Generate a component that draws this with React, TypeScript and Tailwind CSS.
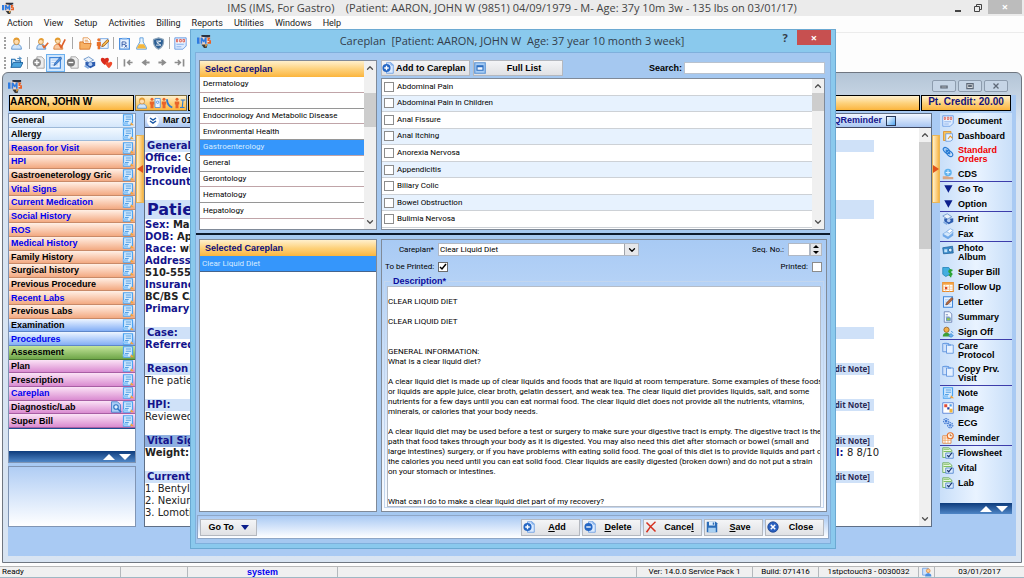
import type { ReactNode } from "react";
import { ChevronDown, ChevronUp } from "lucide-react";

const GOLD = "bg-linear-to-b from-[#fff0cc] via-[#fdd27c] to-[#fbb53a]";
const NAVY_BAR = "bg-linear-to-b from-[#0d3c7c] to-[#4f86c6]";
const BUTTON = "flex items-center border border-[#b4b8bf] bg-linear-to-b from-[#f4f5f7] to-[#e0e1e4]";
const UI = "font-['Open_Sans',sans-serif]";
const BODY = "font-['Roboto',sans-serif]";
const STRONG = "font-['Liberation_Sans',sans-serif] font-bold";

const glyphs: Record<string, ReactNode> = {
  ims: (
    <>
      <circle cx="8" cy="7" r="6" fill="#f4d9c6" />
      <path d="M5 1h10v2l-3 1-7-1z" fill="#2a3140" />
      <path d="M0 4h3v7H0zM4 4h2l2 3 1-3h2v7H9V8l-1 2-2-2v3H4z" fill="#2f7be0" />
      <path d="M15 4h-3v4h2v1h-2v2h4V7h-2V6h1z" fill="#e8622a" />
      <path d="M5 12h7l-1 4H8z" fill="#3b3b3b" />
      <path d="M9 12h3l-2 3z" fill="#e9a53d" />
    </>
  ),
  person: (
    <>
      <path d="M2 15c0-5 3-6 6-6s6 1 6 6z" fill="#cfe4fb" stroke="#4a86c8" />
      <circle cx="8" cy="6" r="3.4" fill="#ffdcae" stroke="#c9862f" />
      <path d="M4 6c-1-7 9-7 8 0-1-3-4-3-5-3-2 0-2 1-3 3z" fill="#e59b2d" />
    </>
  ),
  personCheck: (
    <>
      <path d="M1 15c0-5 2-6 5-6s6 1 6 6z" fill="#cfe4fb" stroke="#4a86c8" />
      <circle cx="6" cy="6" r="3" fill="#ffdcae" stroke="#c9862f" />
      <path d="M3 5c0-5 7-5 7 0-2-2-5-2-7 0z" fill="#e59b2d" />
      <path d="M8 10l2 3 5-6" fill="none" stroke="#e2672a" strokeWidth="2" />
    </>
  ),
  personTick: (
    <>
      <path d="M1 15c0-5 2-6 5-6s6 1 6 6z" fill="#f8c9a0" stroke="#d9772e" />
      <circle cx="6" cy="5" r="3" fill="#ffdcae" stroke="#c9862f" />
      <path d="M2 5c0-6 8-5 7-1-2-1-5-1-7 1z" fill="#e59b2d" />
      <path d="M7 8l3 5 5-10" fill="none" stroke="#dd5f2a" strokeWidth="2" />
    </>
  ),
  folder: (
    <>
      <path d="M5 1h6l3 3v8H5z" fill="#fff" stroke="#e08a3c" />
      <path d="M1 6h4l1 2h9l-2 7H1z" fill="#f7b165" stroke="#d56f1f" />
      <path d="M7 4h4M7 6h5" stroke="#e08a3c" />
    </>
  ),
  personEdit: (
    <>
      <path d="M5 2h10v12H5z" fill="#eef5ff" stroke="#6aa0e0" />
      <circle cx="3.5" cy="3.5" r="2" fill="#e8702a" />
      <path d="M1 6h5v5H5v4H2v-4H1z" fill="#e8702a" />
      <path d="M7 12l1-3 6-6 2 2-6 6z" fill="#f3b84e" stroke="#9a5a1a" />
    </>
  ),
  rx: (
    <>
      <path d="M2 2h12v13H2z" fill="#e8f2ff" stroke="#4b8fe0" strokeWidth="1.5" />
      <path d="M5 1h6v2H5z" fill="#7fb4ee" />
      <path d="M5 12V6h3a2 1.5 0 0 1 0 3H5m3 0l3 4m0-3l-3 3" fill="none" stroke="#234b9c" />
    </>
  ),
  flask: (
    <>
      <path d="M6 1h4v5l4 7v2H2v-2l4-7z" fill="#e9f4ff" stroke="#4e94d8" />
      <path d="M5 9h6l3 5H2z" fill="#f5b63b" />
    </>
  ),
  shield: (
    <>
      <path d="M8 1l6 2c1 6-2 10-6 12C4 13 1 9 2 3z" fill="#2c5f94" stroke="#8fa6bb" strokeWidth="1.5" />
      <path d="M5 5h6L6 7l5 3H5" fill="none" stroke="#fff" />
    </>
  ),
  doc: (
    <>
      <path d="M1 1h14v10l-4 4H1z" fill="#dcebff" stroke="#5b92e2" />
      <path d="M2 3h12v4H2z" fill="#fff" />
      <path d="M3 3h1.5v3H3zM7 3h2v3H7zM11 3h2v3h-2z" fill="none" stroke="#d54a3d" />
      <path d="M3 9h9M3 12h6" stroke="#7fa8e6" />
    </>
  ),
  openFolder: (
    <>
      <path d="M2 14V4h4l1 2h6v3" fill="#cfe8fb" stroke="#1f6cae" strokeWidth="1.4" />
      <path d="M1 14l3-6h12l-3 6z" fill="#4ba3dd" stroke="#1a5c99" />
      <path d="M9 3h4m-2-2l3 2-3 2" fill="none" stroke="#1f6cae" />
    </>
  ),
  plusPage: (
    <>
      <path d="M6 1h6l3 3v11H6z" fill="#eee" stroke="#999" />
      <circle cx="6" cy="8" r="5" fill="#888" />
      <path d="M3 8h6M6 5v6" stroke="#fff" strokeWidth="1.6" />
    </>
  ),
  minusPage: (
    <>
      <path d="M6 1h6l3 3v11H6z" fill="#eee" stroke="#999" />
      <circle cx="6" cy="8" r="5" fill="#777" />
      <path d="M3 8h6" stroke="#fff" strokeWidth="1.6" />
    </>
  ),
  bluePlus: (
    <>
      <path d="M6 1h6l3 3v11H6z" fill="#dcebff" stroke="#5a93dd" />
      <path d="M12 1v3h3" fill="none" stroke="#5a93dd" />
      <circle cx="6" cy="8" r="5.4" fill="#2466c4" />
      <path d="M3 8h6M6 5v6" stroke="#fff" strokeWidth="1.8" />
    </>
  ),
  blueMinus: (
    <>
      <path d="M6 1h6l3 3v11H6z" fill="#dcebff" stroke="#5a93dd" />
      <path d="M12 1v3h3" fill="none" stroke="#5a93dd" />
      <circle cx="6" cy="8" r="5.4" fill="#2466c4" />
      <path d="M3 8h6" stroke="#fff" strokeWidth="1.8" />
    </>
  ),
  letter: (
    <>
      <path d="M2 1h12v14H2z" fill="#e8f2ff" stroke="#3f86dc" strokeWidth="1.4" />
      <path d="M4 5h7M4 8h5M4 11h8" stroke="#9cc0ee" />
      <path d="M5 12l1-3 7-7 2 2-7 7z" fill="#b7683d" stroke="#5c2f1d" strokeWidth=".7" />
    </>
  ),
  editPage: (
    <>
      <path d="M1 2h13v13H1z" fill="#eaf4ff" stroke="#3f86dc" strokeWidth="1.4" />
      <path d="M3 5h7M3 8h5M3 11h8" stroke="#9cc0ee" />
      <path d="M6 12l1-3 7-8 2 2-7 7z" fill="#4b8fe0" stroke="#1d4f98" strokeWidth=".7" />
    </>
  ),
  printer: (
    <>
      <path d="M1 4l6-3 6 4-6 3z" fill="#e9f1fb" stroke="#5f8cc4" />
      <path d="M3 7l5 1 7-1v5l-6 3-6-4z" fill="#2d5db0" />
      <circle cx="9" cy="10" r="2.4" fill="#b9d0f2" />
      <path d="M2 12l5 3" stroke="#7fa9e0" strokeWidth="2" />
    </>
  ),
  hearts: (
    <>
      <path d="M6 11C0 7 0 2 3 2c2 0 3 1 3 2 0-1 1-2 3-2 3 0 3 5-3 9z" fill="#d92b1c" />
      <path d="M11 15c-5-4-5-8-2-8 1 0 2 1 2 2 0-1 1-2 2-2 3 0 3 4-2 8z" fill="#ef4a2c" />
    </>
  ),
  first: <path d="M3 4v9M13 8H7m3-3L7 8l3 3" fill="none" stroke="#8d8d8d" strokeWidth="2" />,
  prev: <path d="M13 8H5m4-3L5 8l4 3" fill="none" stroke="#8d8d8d" strokeWidth="2.4" />,
  next: <path d="M3 8h8M7 5l4 3-4 3" fill="none" stroke="#8d8d8d" strokeWidth="2.4" />,
  last: <path d="M13 4v9M2 8h7M6 5l3 3-3 3" fill="none" stroke="#8d8d8d" strokeWidth="2" />,
  note: (
    <>
      <path d="M2 1h12v10l-3 4H2z" fill="#d3eafe" stroke="#4ba2f0" strokeWidth="1.6" />
      <path d="M5 4h7M5 7h7M4 10h5" stroke="#4a98e0" strokeWidth="1.2" />
      <path d="M1 11h7v3H1z" fill="#8cc6f8" />
      <path d="M12 11l4 4h-5z" fill="#f2a33c" />
    </>
  ),
  search: (
    <>
      <path d="M2 1h8l4 4v10H2z" fill="#a9cdf6" stroke="#2f74c4" />
      <circle cx="8" cy="8" r="3" fill="#e4f2ff" stroke="#2f74c4" strokeWidth="1.5" />
      <path d="M10 10l5 5" stroke="#2f74c4" strokeWidth="2" />
    </>
  ),
  guide: (
    <>
      <circle cx="4" cy="3" r="2" fill="#e8642a" />
      <path d="M1 6h6v4H6v5H2v-5H1z" fill="#e8642a" />
      <path d="M8 2h7v12H8z" fill="#eaf3ff" stroke="#3f86dc" />
      <circle cx="11.5" cy="7" r="1.6" fill="none" stroke="#3f86dc" />
    </>
  ),
  call: (
    <>
      <circle cx="4" cy="3" r="2" fill="#e8642a" />
      <path d="M1 6h6v4H6v5H2v-5H1z" fill="#e8642a" />
      <path d="M8 3c0 6 2 9 7 11" fill="none" stroke="#2f7bd0" strokeWidth="2.5" />
    </>
  ),
  info: (
    <>
      <circle cx="4" cy="3" r="2" fill="#e8642a" />
      <path d="M1 6h6v4H6v5H2v-5H1z" fill="#e8642a" />
      <path d="M9 4h6M12 4l-1 10M8 14h6" fill="none" stroke="#2f7bd0" strokeWidth="1.5" />
    </>
  ),
  dashboard: (
    <>
      <path d="M2 2h10v12H2z" fill="#f9c35a" stroke="#d98a1d" />
      <path d="M5 5h9v8l-3 2H5z" fill="#eaf4ff" stroke="#5a93dd" />
      <path d="M8 12l3-4 3 3" fill="none" stroke="#e59b2d" strokeWidth="1.5" />
    </>
  ),
  chain: (
    <g fill="none" stroke="#2b7cd3" strokeWidth="1.5">
      <ellipse cx="6" cy="6" rx="5" ry="3" transform="rotate(40 6 6)" fill="#a9d2fa" />
      <ellipse cx="10" cy="10" rx="5" ry="3" transform="rotate(40 10 10)" />
      <path d="M5 5l6 6" />
    </g>
  ),
  hand: (
    <>
      <circle cx="8" cy="6" r="5" fill="#5fb2ee" />
      <path d="M8 3v6M5 6h6" stroke="#dff0ff" strokeWidth="1.5" />
      <path d="M1 11h6l3 1h5v3H1z" fill="#d8a684" />
    </>
  ),
  down: <path d="M3 3h11L8.5 13z" fill="#0c1f8c" />,
  fax: (
    <>
      <path d="M1 8l8-5 6 3-7 6z" fill="#d5e8fb" stroke="#7daee4" />
      <path d="M6 5l5-4 4 2-5 4z" fill="#fff" stroke="#7daee4" />
      <path d="M1 8l7 4v3l-7-4zM8 12l7-6v4l-7 5z" fill="#6fa8e8" />
    </>
  ),
  camera: (
    <>
      <path d="M1 5l13-2 1 9-13 1z" fill="#3d8fce" stroke="#1c5f98" />
      <path d="M3 7h4v4H3z" fill="#bfe2f8" />
      <circle cx="11" cy="8" r="2.5" fill="#dff1ff" stroke="#1c5f98" />
    </>
  ),
  money: (
    <>
      <path d="M1 2h8l2 3v6l-6 3-4-3z" fill="#43aee0" stroke="#1c7fb4" />
      <path d="M14 6c-5-2-6 2-3 3s3 4-2 3M11.5 4v11" fill="none" stroke="#2aa434" strokeWidth="2" />
    </>
  ),
  calendar: (
    <>
      <path d="M1 2h14v12H1z" fill="#fff" stroke="#e58a2c" strokeWidth="1.5" />
      <path d="M1 2h14v3H1z" fill="#f5a445" />
      <path d="M5 5v9M10 5v9M1 8h14M1 11h14" stroke="#f3bf85" />
      <path d="M4 8h3v3H4z" fill="#d94a2a" />
    </>
  ),
  summary: (
    <>
      <path d="M3 1h7l3 3v11H3z" fill="#f4f8ff" stroke="#5a72a8" />
      <path d="M5 5h3M5 8h5" stroke="#5a72a8" />
      <path d="M6 9h5v4H6z" fill="#9cc64b" stroke="#4d86c8" />
    </>
  ),
  signOff: (
    <>
      <circle cx="6" cy="5" r="3.5" fill="#f2b04a" stroke="#8d5716" />
      <path d="M1 14c0-4 3-5 5-5s5 1 5 5z" fill="#3d9f38" />
      <path d="M9 13l3-3 3 3-3 2zM12 7l3 2" fill="#6bb0ee" stroke="#2f80d0" />
    </>
  ),
  copy: (
    <>
      <path d="M1 2h8v11H1z" fill="#cfe2fb" stroke="#4b86d8" />
      <path d="M6 4h9v11H6z" fill="#e6f1ff" stroke="#4b86d8" />
      <path d="M3 1h4v2H3zM8 3h4v2H8z" fill="#6fa3e6" />
    </>
  ),
  image: (
    <>
      <path d="M1 1h14v14H1z" fill="#fff" stroke="#3f6fd0" />
      <path d="M3 3h4v4H3z" fill="#e04a35" />
      <path d="M7 7h3v3H7z" fill="#2d3f9c" />
      <path d="M10 9h4v5h-4z" fill="#f0b63a" />
      <path d="M10 3h3v3h-3z" fill="#4b9ee8" />
    </>
  ),
  gears: (
    <g fill="#c5dcfa" stroke="#4a7fd4" strokeWidth="1.5">
      <circle cx="5.5" cy="5.5" r="3.5" strokeDasharray="2 1" />
      <circle cx="11" cy="11" r="3.5" strokeDasharray="2 1" />
      <circle cx="5.5" cy="5.5" r="1" />
      <circle cx="11" cy="11" r="1" />
    </g>
  ),
  reminder: (
    <>
      <path d="M1 5h11v10H1z" fill="#fff" stroke="#e07a2c" />
      <path d="M4 5v10M8 5v10M1 8h11M1 11h11" stroke="#ef9c55" />
      <circle cx="11" cy="5" r="4" fill="#fff4e4" stroke="#e8702a" strokeWidth="1.5" />
      <path d="M11 3v2h2" fill="none" stroke="#8a3d10" />
    </>
  ),
  sheet: (
    <>
      <path d="M1 1h8l4 3v10H1z" fill="#e9f7e0" stroke="#5ba24a" />
      <path d="M2 3h8M2 6h10" stroke="#7fbf62" strokeWidth="1.5" />
      <path d="M5 8h10v7H5z" fill="#dcebff" stroke="#3f77c8" />
      <path d="M7 11l2 2 4-5" fill="none" stroke="#16306e" strokeWidth="1.6" />
    </>
  ),
  window: (
    <>
      <path d="M1 1h14v14H1z" fill="#a8cdf5" stroke="#5a93d4" strokeWidth="1.5" />
      <path d="M4 5h8v6H4z" fill="#f2f8ff" stroke="#2a6cc0" strokeWidth="1.5" />
      <path d="M4 5h8v2H4z" fill="#2a6cc0" />
    </>
  ),
  cross: <path d="M2 2c4 4 8 8 12 12M14 1C9 5 5 10 2 15" fill="none" stroke="#d5301f" strokeWidth="2" />,
  disk: (
    <>
      <path d="M1 1h12l2 2v12H1z" fill="#2b6cb8" />
      <path d="M4 1h8v5H4z" fill="#dfeefc" />
      <path d="M3 9h10v6H3z" fill="#a9d0f2" />
      <path d="M9 2h2v3H9z" fill="#2b6cb8" />
    </>
  ),
  closeBall: (
    <>
      <circle cx="8" cy="8" r="7" fill="#2a60c0" stroke="#173f8a" />
      <path d="M5 5l6 6M11 5l-6 6" stroke="#fff" strokeWidth="2" />
    </>
  ),
  user: (
    <>
      <path d="M1 2h9v11H1z" fill="#cfe2fb" stroke="#4b86d8" />
      <circle cx="10" cy="6" r="3" fill="#ffcf95" stroke="#d97a22" />
      <path d="M5 15c0-4 2-5 5-5s5 1 5 5z" fill="#4b8fe0" />
    </>
  ),
};

function Icon({ name, className = "size-3" }: { name: string; className?: string }) {
  return (
    <svg viewBox="0 0 16 16" className={`shrink-0 ${className}`} aria-hidden="true">
      {glyphs[name]}
    </svg>
  );
}

const menus = ["Action", "View", "Setup", "Activities", "Billing", "Reports", "Utilities", "Windows", "Help"];

const ORANGE = "from-[#fff0e6] to-[#f2a981] border-[#c98a68]";
const BLUE = "from-[#eef5ff] to-[#83aef5] border-[#5e86c8]";
const PINK = "from-[#fbe3f6] to-[#d98bd0] border-[#a85ea4]";
const PALE = "from-[#f3f9ff] to-[#d5e7fb] border-[#9db9d8]";
const GREEN = "from-[#c4e59a] to-[#6ea648] border-[#4d7a35]";

const chartItems: { label: string; tone: string; blue?: boolean; extra?: boolean }[] = [
  { label: "General", tone: PALE },
  { label: "Allergy", tone: PALE },
  { label: "Reason for Visit", tone: ORANGE, blue: true },
  { label: "HPI", tone: ORANGE, blue: true },
  { label: "Gastroeneterology Gric", tone: ORANGE },
  { label: "Vital Signs", tone: ORANGE, blue: true },
  { label: "Current Medication", tone: ORANGE, blue: true },
  { label: "Social History", tone: ORANGE, blue: true },
  { label: "ROS", tone: ORANGE, blue: true },
  { label: "Medical History", tone: ORANGE, blue: true },
  { label: "Family History", tone: ORANGE },
  { label: "Surgical history", tone: ORANGE },
  { label: "Previous Procedure", tone: ORANGE },
  { label: "Recent Labs", tone: ORANGE, blue: true },
  { label: "Previous Labs", tone: ORANGE },
  { label: "Examination", tone: BLUE },
  { label: "Procedures", tone: BLUE, blue: true },
  { label: "Assessment", tone: GREEN },
  { label: "Plan", tone: PINK },
  { label: "Prescription", tone: PINK },
  { label: "Careplan", tone: PINK, blue: true },
  { label: "Diagnostic/Lab", tone: PINK, extra: true },
  { label: "Super Bill", tone: PINK },
];

const actionGroups: { icon: string; label: string; red?: boolean; tall?: boolean }[][] = [
  [
    { icon: "doc", label: "Document" },
    { icon: "dashboard", label: "Dashboard" },
    { icon: "chain", label: "Standard Orders", red: true, tall: true },
    { icon: "hand", label: "CDS" },
  ],
  [
    { icon: "down", label: "Go To" },
    { icon: "down", label: "Option" },
  ],
  [
    { icon: "printer", label: "Print" },
    { icon: "fax", label: "Fax" },
  ],
  [
    { icon: "camera", label: "Photo Album", tall: true },
    { icon: "money", label: "Super Bill" },
    { icon: "calendar", label: "Follow Up" },
    { icon: "letter", label: "Letter" },
    { icon: "summary", label: "Summary" },
    { icon: "signOff", label: "Sign Off" },
  ],
  [
    { icon: "copy", label: "Care Protocol", tall: true },
    { icon: "copy", label: "Copy Prv. Visit", tall: true },
  ],
  [
    { icon: "note", label: "Note" },
    { icon: "image", label: "Image" },
    { icon: "gears", label: "ECG" },
    { icon: "reminder", label: "Reminder" },
  ],
  [
    { icon: "sheet", label: "Flowsheet" },
    { icon: "sheet", label: "Vital" },
    { icon: "sheet", label: "Lab" },
  ],
];

const categories = [
  "Dermatology",
  "Dietetics",
  "Endocrinology And Metabolic Disease",
  "Environmental Health",
  "Gastroenterology",
  "General",
  "Gerontology",
  "Hematology",
  "Hepatology",
];

const careplans = [
  "Abdominal Pain",
  "Abdominal Pain In Children",
  "Anal Fissure",
  "Anal Itching",
  "Anorexia Nervosa",
  "Appendicitis",
  "Biliary Colic",
  "Bowel Obstruction",
  "Bulimia Nervosa",
];

const description = `
CLEAR LIQUID DIET

CLEAR LIQUID DIET


GENERAL INFORMATION:
What is a clear liquid diet?

A clear liquid diet is made up of clear liquids and foods that are liquid at room temperature. Some examples of these foods
or liquids are apple juice, clear broth, gelatin dessert, and weak tea. The clear liquid diet provides liquids, salt, and some
nutrients for a few days until you can eat normal food. The clear liquid diet does not provide all the nutrients, vitamins,
minerals, or calories that your body needs.

A clear liquid diet may be used before a test or surgery to make sure your digestive tract is empty. The digestive tract is the
path that food takes through your body as it is digested. You may also need this diet after stomach or bowel (small and
large intestines) surgery, or if you have problems with eating solid food. The goal of this diet is to provide liquids and part of
the calories you need until you can eat solid food. Clear liquids are easily digested (broken down) and do not put a strain
on your stomach or intestines.


What can I do to make a clear liquid diet part of my recovery?`;

function Grip() {
  return <span className="ml-1 h-3 w-0 border-l-2 border-dotted border-[#a0a0a0]" />;
}

function Divider() {
  return <span className="h-3 w-px bg-[#a8a8a8]" />;
}

function Tool({ name, active }: { name: string; active?: boolean }) {
  return (
    <button
      aria-label={name}
      className={`flex h-4 w-[17px] items-center justify-center ${active ? "bg-[#cfe6fc] outline outline-[#6db0ee]" : ""}`}
    >
      <Icon name={name} className="size-[13px]" />
    </button>
  );
}

function Toolbars() {
  return (
    <>
      <div className="flex h-[21px] items-center border-t border-[#ececec]">
        <Grip />
        <div className="w-0.5" />
        <Tool name="person" />
        <div className="w-1" />
        <Divider />
        <div className="w-1" />
        <Tool name="personCheck" />
        <Tool name="personTick" />
        <div className="w-1" />
        <Divider />
        <div className="w-1" />
        <Tool name="folder" />
        <Tool name="personEdit" />
        <div className="w-0.5" />
        <Divider />
        <div className="w-0.5" />
        <Tool name="rx" />
        <Tool name="flask" />
        <Tool name="shield" />
        <div className="w-0.5" />
        <Divider />
        <div className="w-0.5" />
        <Tool name="doc" />
      </div>
      <div className="flex h-[19px] items-center">
        <Grip />
        <div className="w-0.5" />
        <Tool name="openFolder" />
        <div className="w-0.5" />
        <Divider />
        <div className="w-0.5" />
        <Tool name="plusPage" />
        <Tool name="editPage" active />
        <Tool name="minusPage" />
        <Tool name="printer" />
        <Tool name="hearts" />
        <div className="w-0.5" />
        <Divider />
        <div className="w-0.5" />
        <Tool name="first" />
        <Tool name="prev" />
        <Tool name="next" />
        <Tool name="last" />
      </div>
    </>
  );
}

function UpDown() {
  return (
    <div className={`flex h-[11px] items-center justify-end gap-1 pr-1 ${NAVY_BAR}`}>
      <button aria-label="Scroll up">
        <svg viewBox="0 0 12 6" className="h-1.5 w-3">
          <path d="M0 6h12L6 0z" fill="#fff" />
        </svg>
      </button>
      <button aria-label="Scroll down">
        <svg viewBox="0 0 12 6" className="h-1.5 w-3">
          <path d="M0 0h12L6 6z" fill="#fff" />
        </svg>
      </button>
    </div>
  );
}

function ScrollBar({ lead, thumb }: { lead: string; thumb: string }) {
  return (
    <div className="flex w-3 shrink-0 flex-col items-center bg-[#f0f0f0] text-[#505050]">
      <ChevronUp className="my-0.5 size-2.5" strokeWidth={3} />
      <div className={lead} />
      <div className={`w-full bg-[#cdcdcd] ${thumb}`} />
      <div className="flex-1" />
      <ChevronDown className="my-0.5 size-2.5" strokeWidth={3} />
    </div>
  );
}

function ChartNav() {
  return (
    <nav className="flex w-[128px] shrink-0 flex-col gap-[3px]">
      <div className="flex flex-1 flex-col border border-[#8095b4] bg-white">
        <div className="grid h-[314px] auto-rows-fr">
          {chartItems.map((item) => (
            <button
              key={item.label}
              className={`flex min-h-0 items-center border-b bg-linear-to-b pr-px pl-0.5 text-[9px] leading-3 font-bold ${item.tone} ${item.blue ? "text-[#0000f0]" : "text-black"}`}
            >
              <span className="whitespace-nowrap">{item.label}</span>
              <span className="flex flex-1 justify-end">
                {item.extra && <Icon name="search" />}
                <Icon name="note" />
              </span>
            </button>
          ))}
        </div>
        <div className="flex-1 border-t border-[#1d4c90]" />
        <UpDown />
      </div>
      <div className="h-[61px] border border-[#8095b4] bg-linear-to-b from-[#b0cdf4] to-white" />
    </nav>
  );
}

function Splitter({ side }: { side: "left" | "right" }) {
  return (
    <div className="w-2 shrink-0 pt-[22px]">
      <div className="flex h-[68px] items-center justify-center border border-[#e8b65a] bg-linear-to-r from-[#fff0c8] to-[#f7b53f]">
        <svg viewBox="0 0 6 8" className="h-2 w-1.5">
          <path d={side === "left" ? "M6 0v8L0 4z" : "M0 0v8l6-4z"} fill="#e0521a" />
        </svg>
      </div>
    </div>
  );
}

function Heading({ children, edit, dark }: { children: ReactNode; edit?: boolean; dark?: boolean }) {
  return (
    <div className={`mr-[45px] flex h-3 justify-between pl-0.5 ${dark ? "bg-[#8fb0e0]" : "bg-[#cfe1f8]"}`}>
      <h2 className="font-bold text-[#14148c]">{children}</h2>
      {edit && (
        <button className="bg-[#cfe1f8] pr-1 font-['Open_Sans',sans-serif] text-[8px] font-bold text-[#2a2a55]">
          [Edit Note]
        </button>
      )}
    </div>
  );
}

function Line({ label, children }: { label?: string; children?: ReactNode }) {
  return (
    <p className="h-3 whitespace-nowrap">
      {label && <b className="text-[#14148c]">{label} </b>}
      {children}
    </p>
  );
}

function ChartDocument() {
  return (
    <main className="flex min-w-0 flex-1 flex-col border border-[#5f6f86] bg-white">
      <div className="flex h-[14px] items-center border-b border-[#404860] bg-linear-to-b from-[#f2f7ff] to-[#a9c6f2] pl-0.5 text-[9px] font-bold">
        <button aria-label="Collapse" className="flex size-3 items-center justify-center rounded-full bg-white">
          <svg viewBox="0 0 8 8" className="size-2">
            <path d="M1 1l3 2 3-2M1 4l3 2 3-2" fill="none" stroke="#1d5aa8" strokeWidth="1.5" />
          </svg>
        </button>
        <span className="flex-1 pl-1">Mar 01</span>
        <label className="flex items-center gap-1 pr-[35px] text-[#14148c]">
          QReminder
          <input type="checkbox" className="size-2.5 appearance-none border border-[#2b3a5a] bg-linear-to-br from-white to-[#4ba3ee]" />
        </label>
      </div>
      <div className="flex flex-1">
        <div className="min-w-0 flex-1 overflow-hidden pt-3 font-['DejaVu_Sans',sans-serif] text-[10px] leading-3 text-[#222]">
          <Heading>General</Heading>
          <Line label="Office:">GI</Line>
          <Line label="Provider:" />
          <Line label="Encounter:" />
          <div className="mt-3 mr-[45px] h-[19px] bg-[#cfe1f8] pl-0.5">
            <h1 className="text-base leading-[19px] font-bold text-[#14148c]">Patient</h1>
          </div>
          <Line label="Sex:"><b>Male</b></Line>
          <Line label="DOB:"><b>Apr</b></Line>
          <Line label="Race:"><b>wht</b></Line>
          <Line label="Address:" />
          <Line><b>510-5555</b></Line>
          <Line label="Insurance:" />
          <Line><b>BC/BS CA</b></Line>
          <Line label="Primary:" />
          <div className="h-3" />
          <Heading>Case:</Heading>
          <Line label="Referred by:" />
          <div className="h-3" />
          <Heading edit>Reason</Heading>
          <Line>The patient</Line>
          <div className="h-3" />
          <Heading edit>HPI:</Heading>
          <Line>Reviewed</Line>
          <div className="h-3" />
          <Heading edit dark>Vital Sign</Heading>
          <div className="mr-10 flex justify-between">
            <Line><b>Weight:</b></Line>
            <Line label="Pain Level:">8 8/10</Line>
          </div>
          <div className="h-3" />
          <Heading edit>Current</Heading>
          <Line>1. Bentyl</Line>
          <Line>2. Nexium</Line>
          <Line>3. Lomotil</Line>
        </div>
        <ScrollBar lead="h-0" thumb="h-[107px]" />
      </div>
    </main>
  );
}

function ActionBar() {
  return (
    <aside className="w-[72px] shrink-0">
      <div className="h-[390px] bg-linear-to-r from-[#c9dff9] via-[#e9f3ff] to-[#c9dff9]">
        {actionGroups.map((group, i) => (
          <div key={i} className={i > 0 ? "shadow-[inset_0_1px_0_#3d3daa]" : ""}>
            {group.map((item) => (
              <button
                key={item.label}
                className={`flex w-full gap-1 pl-0.5 text-left text-[9px] font-bold ${item.tall ? "h-[23px] pt-[3px] leading-[9px]" : "h-[15px] items-center leading-3"} ${item.red ? "text-[#f00000]" : "text-black"}`}
              >
                <Icon name={item.icon} />
                <span className={item.tall ? "w-12" : "whitespace-nowrap"}>{item.label}</span>
              </button>
            ))}
          </div>
        ))}
      </div>
      <UpDown />
    </aside>
  );
}

function ChartWindow() {
  return (
    <section className="mx-0.5 flex flex-1 flex-col rounded-t-md border border-[#6f7680] bg-linear-to-b from-[#b4c5d6] to-[#d8e4f2] to-10% px-[5px] pb-1.5">
      <div className="flex h-[22px] items-center justify-between pr-1">
        <Icon name="ims" className="mt-1 size-3.5" />
        <div className="flex gap-0.5 pt-1 pr-1">
          {["M3 8h10v3H3z", "M3 4h10v8H3zM6 7h4v2H6z", "M4 4l8 8M12 4l-8 8"].map((d, i) => (
            <button
              key={d}
              aria-label={["Minimize", "Restore", "Close"][i]}
              className="flex h-3 w-6 items-center justify-center rounded-xs border border-[#8d9cae] bg-[#c6d5e6]"
            >
              <svg viewBox="0 0 16 16" className="size-2.5">
                <path d={d} fill="#fff" stroke="#5d6877" strokeWidth="2" />
              </svg>
            </button>
          ))}
        </div>
      </div>
      <div className="flex flex-1 flex-col bg-[#a9caf3] pr-1 pb-[29px]">
        <div className="mb-0.5 flex h-4 gap-px pr-px pl-px text-[10px] leading-3 font-bold">
          <div className={`w-[125px] border border-black ${GOLD}`}>AARON, JOHN W</div>
          <div className={`flex w-[52px] items-center justify-around border border-[#7a6a40] ${GOLD}`}>
            <Icon name="person" />
            <Icon name="guide" />
            <Icon name="call" />
            <Icon name="info" />
          </div>
          <div className={`flex-1 border border-black ${GOLD}`} />
          <div className={`w-[90px] border border-black text-center text-[#14147c] ${GOLD}`}>Pt. Credit: 20.00</div>
        </div>
        <div className="flex flex-1">
          <ChartNav />
          <Splitter side="left" />
          <ChartDocument />
          <Splitter side="right" />
          <ActionBar />
        </div>
      </div>
    </section>
  );
}

function CategoryList() {
  return (
    <div className="flex h-[170px] w-[178px] border border-[#808a98] bg-white">
      <div className="min-w-0 flex-1">
        <h3 className={`h-4 pl-[5px] text-[9px] leading-4 text-[#0c0c7c] ${STRONG} ${GOLD}`}>Select Careplan</h3>
        <ul className="grid h-[142px] auto-rows-fr">
          {categories.map((name, i) => (
            <li key={name} className={`min-h-0 border-b ${i % 2 ? "border-[#969696]" : "border-[#c0a4a8]"}`}>
              <button
                className={`h-full w-full pl-[3px] text-left whitespace-nowrap ${name === "Gastroenterology" ? "bg-[#3596fb] text-[#d8ecff]" : ""}`}
              >
                {name}
              </button>
            </li>
          ))}
        </ul>
      </div>
      <ScrollBar lead="h-[18px]" thumb="h-[34px]" />
    </div>
  );
}

function CareplanPicker() {
  return (
    <div className="flex min-w-0 flex-1 flex-col">
      <div className={`flex h-[18px] items-start gap-[3px] text-[9px] ${STRONG}`}>
        <button className={`h-4 w-[89px] gap-0.5 whitespace-nowrap ${BUTTON}`}>
          <Icon name="bluePlus" />
          Add to Careplan
        </button>
        <button className={`h-4 w-[90px] ${BUTTON}`}>
          <Icon name="window" />
          <span className="flex-1">Full List</span>
        </button>
        <label className="flex flex-1 items-center justify-end gap-0.5 pt-0.5">
          Search:
          <input className="h-3 w-[141px] border border-[#b9c2ce] bg-white px-0.5 font-normal" />
        </label>
      </div>
      <div className="flex h-[152px] border border-[#808a98] bg-white">
        <ul className="grid h-[149px] min-w-0 flex-1 auto-rows-fr">
          {careplans.map((name) => (
            <li key={name} className="min-h-0 border-b border-[#cdd1d6] even:bg-[#e7f2fe]">
              <label className="flex h-full items-center gap-[3px] pl-0.5">
                <input type="checkbox" className="size-2.5 appearance-none border border-[#8c8c8c] bg-white" />
                {name}
              </label>
            </li>
          ))}
        </ul>
        <ScrollBar lead="h-0" thumb="h-[18px]" />
      </div>
    </div>
  );
}

function CareplanForm() {
  return (
    <form className="flex min-w-0 flex-1 flex-col border border-[#808a98] bg-linear-to-b from-[#a8caf4] to-[#fafcff] px-0.5 pt-0.5 pb-[3px]">
      <div className="flex h-[15px] items-center pr-0.5">
        <label htmlFor="careplan" className="w-[54px] pr-1 text-right">
          Careplan*
        </label>
        <div className="flex h-[13px] w-[201px] border border-[#b0b8c4] bg-white">
          <select id="careplan" className="min-w-0 flex-1 appearance-none pl-px">
            <option>Clear Liquid Diet</option>
          </select>
          <span className="flex w-3.5 items-center justify-center border-l border-[#a0a4aa] bg-[#e6e7ea]">
            <ChevronDown className="size-2.5" strokeWidth={3} />
          </span>
        </div>
        <label htmlFor="seq" className="flex-1 pr-1 text-right">
          Seq. No.:
        </label>
        <input id="seq" className="h-[13px] w-[22px] border border-[#b0b8c4] bg-white" />
        <div className="flex h-[13px] w-3 flex-col border border-[#b4b8bf] bg-[#e6e7ea]">
          <button type="button" aria-label="Increase" className="flex flex-1 items-center justify-center">
            <svg viewBox="0 0 6 3" className="h-[3px] w-1.5">
              <path d="M0 3h6L3 0z" />
            </svg>
          </button>
          <button type="button" aria-label="Decrease" className="flex flex-1 items-center justify-center">
            <svg viewBox="0 0 6 3" className="h-[3px] w-1.5">
              <path d="M0 0h6L3 3z" />
            </svg>
          </button>
        </div>
      </div>
      <div className="flex h-[19px] items-center justify-between pr-0.5 pl-px">
        <label className="flex items-center gap-1">
          To be Printed:
          <span className="grid">
            <input
              type="checkbox"
              defaultChecked
              className="col-start-1 row-start-1 size-2.5 appearance-none border border-[#6c6c6c] bg-white"
            />
            <svg viewBox="0 0 10 10" className="pointer-events-none col-start-1 row-start-1 size-2.5">
              <path d="M2 5l2 2 4-5" fill="none" stroke="#000" strokeWidth="1.5" />
            </svg>
          </span>
        </label>
        <label className="flex items-center gap-1">
          Printed:
          <input type="checkbox" className="size-2.5 appearance-none border border-[#8c8c8c] bg-white" />
        </label>
      </div>
      <fieldset className="flex min-w-0 flex-1 flex-col border border-[#c3d6ee] px-0.5">
        <legend className={`ml-1 px-0.5 text-[9px] leading-[10px] text-[#0c0c9c] ${STRONG}`}>
          <label htmlFor="description">Description*</label>
        </legend>
        <textarea
          id="description"
          className="w-full flex-1 resize-none overflow-hidden border border-[#b4bcc8] bg-white text-[8px] leading-[10px] whitespace-pre"
          defaultValue={description}
        />
      </fieldset>
    </form>
  );
}

function FooterButton({ icon, children }: { icon: string; children: ReactNode }) {
  return (
    <button className={`h-[17px] w-[59px] pl-px ${BUTTON}`}>
      <Icon name={icon} />
      <span className="flex-1">{children}</span>
    </button>
  );
}

function CareplanDialog() {
  return (
    <div
      role="dialog"
      aria-label="Careplan"
      className={`absolute top-[29px] left-[190px] w-[646px] border border-[#6ba9d2] bg-[#8ac9ed] px-1 pb-1 text-[8px] leading-3 ${BODY}`}
    >
      <div className={`flex h-[22px] items-center pl-0.5 text-[#333d4a] ${UI}`}>
        <Icon name="ims" className="size-3.5" />
        <h2 className="flex-1 pl-10 text-center text-[11px] whitespace-pre">
          Careplan  [Patient: AARON, JOHN W  Age: 37 year 10 month 3 week]
        </h2>
        <button className="w-6 self-start pt-0.5 text-[11px] font-bold" aria-label="Help">
          ?
        </button>
        <button className="h-[15px] w-[34px] self-start bg-[#c75050] text-[11px] leading-[13px] font-bold text-white" aria-label="Close">
          ×
        </button>
      </div>
      <div className="border border-[#7fb0dc] bg-[#a5c8f0] pb-1">
        <div className="flex gap-1 pt-[7px] pr-[5px] pb-[3px] pl-[3px]">
          <CategoryList />
          <CareplanPicker />
        </div>
        <div className="h-0.5 bg-[#0c1a2c]" />
        <div className="flex h-[277px] gap-1 px-[3px] pt-1">
          <div className="w-[178px] border border-[#808a98] bg-white">
            <h3 className={`h-4 pl-[5px] text-[9px] leading-4 text-[#0c0c7c] ${STRONG} ${GOLD}`}>Selected Careplan</h3>
            <button className="h-4 w-full border-b border-[#46648c] bg-[#3596fb] pl-0.5 text-left text-[#d8ecff]">
              Clear Liquid Diet
            </button>
          </div>
          <CareplanForm />
        </div>
        <div
          className={`mx-px mt-[3px] flex h-6 items-center gap-0.5 border border-[#8ea6c6] bg-linear-to-b from-[#a9c9f3] to-white pr-1 pl-0.5 text-[9px] ${STRONG}`}
        >
          <button className={`h-[17px] w-[57px] justify-around px-1 ${BUTTON}`}>
            Go To
            <svg viewBox="0 0 8 5" className="h-[5px] w-2">
              <path d="M0 0h8L4 5z" fill="#0c1f8c" />
            </svg>
          </button>
          <div className="flex-1" />
          <FooterButton icon="bluePlus"><u>A</u>dd</FooterButton>
          <FooterButton icon="blueMinus"><u>D</u>elete</FooterButton>
          <FooterButton icon="cross">Cance<u>l</u></FooterButton>
          <FooterButton icon="disk"><u>S</u>ave</FooterButton>
          <FooterButton icon="closeBall">Close</FooterButton>
        </div>
      </div>
    </div>
  );
}

function StatusBar() {
  const cell = "border-l border-[#b4b8bc] text-center";
  return (
    <footer
      className={`mt-[3px] flex h-3 items-center border-y border-t-[#b8b8b8] border-b-[#9fb8c4] bg-[#f0f0f0] text-[8px] leading-[10px] ${BODY}`}
    >
      <span className="w-[120px] pl-0.5">Ready</span>
      <span className={`w-[67px] ${cell}`}>&nbsp;</span>
      <span className={`w-[150px] text-[9px] text-[#0000f0] ${STRONG} ${cell}`}>system</span>
      <span className={`flex-1 ${cell}`}>&nbsp;</span>
      <span className={`w-[116px] ${cell}`}>Ver: 14.0.0 Service Pack 1</span>
      <span className={`w-[66px] ${cell}`}>Build: 071416</span>
      <span className={`w-[100px] ${cell}`}>1stpctouch3 - 0030032</span>
      <span className={`flex w-4 justify-center ${cell}`}>
        <Icon name="user" className="size-2.5" />
      </span>
      <span className={`w-[90px] ${cell}`}>03/01/2017</span>
    </footer>
  );
}

export default function App() {
  return (
    <div className="relative flex min-h-screen flex-col bg-[#fdfdfd] font-['Liberation_Sans',sans-serif] text-black">
      <header className={`flex h-4 items-center bg-[#ebebeb] pl-0.5 text-[#444] ${UI}`}>
        <Icon name="ims" className="size-3" />
        <h1 className="flex-1 pl-[62px] text-center text-[11px] leading-4 whitespace-pre">
          IMS (IMS, For Gastro)    (Patient: AARON, JOHN W (9851) 04/09/1979 - M- Age: 37y 10m 3w - 135 lbs on 03/01/17)
        </h1>
        <button aria-label="Minimize" className="w-5">
          <svg viewBox="0 0 8 8" className="mx-auto size-2">
            <path d="M1 6h6v2H1z" fill="#444" />
          </svg>
        </button>
        <button aria-label="Restore" className="w-5">
          <svg viewBox="0 0 8 8" className="mx-auto size-2">
            <path d="M2.5 2V.5h5v5H6M.5 2.5h5v5h-5z" fill="none" stroke="#444" />
          </svg>
        </button>
        <button aria-label="Close" className="mr-0.5 h-[14px] w-[34px] self-start bg-[#bcbcbc] text-[11px] leading-3 font-bold text-white">
          ×
        </button>
      </header>
      <nav className={`flex h-4 items-center gap-[11px] pl-[7px] text-[9px] text-[#222] ${BODY}`}>
        {menus.map((m) => (
          <button key={m}>{m}</button>
        ))}
      </nav>
      <Toolbars />
      <ChartWindow />
      <StatusBar />
      <CareplanDialog />
    </div>
  );
}
